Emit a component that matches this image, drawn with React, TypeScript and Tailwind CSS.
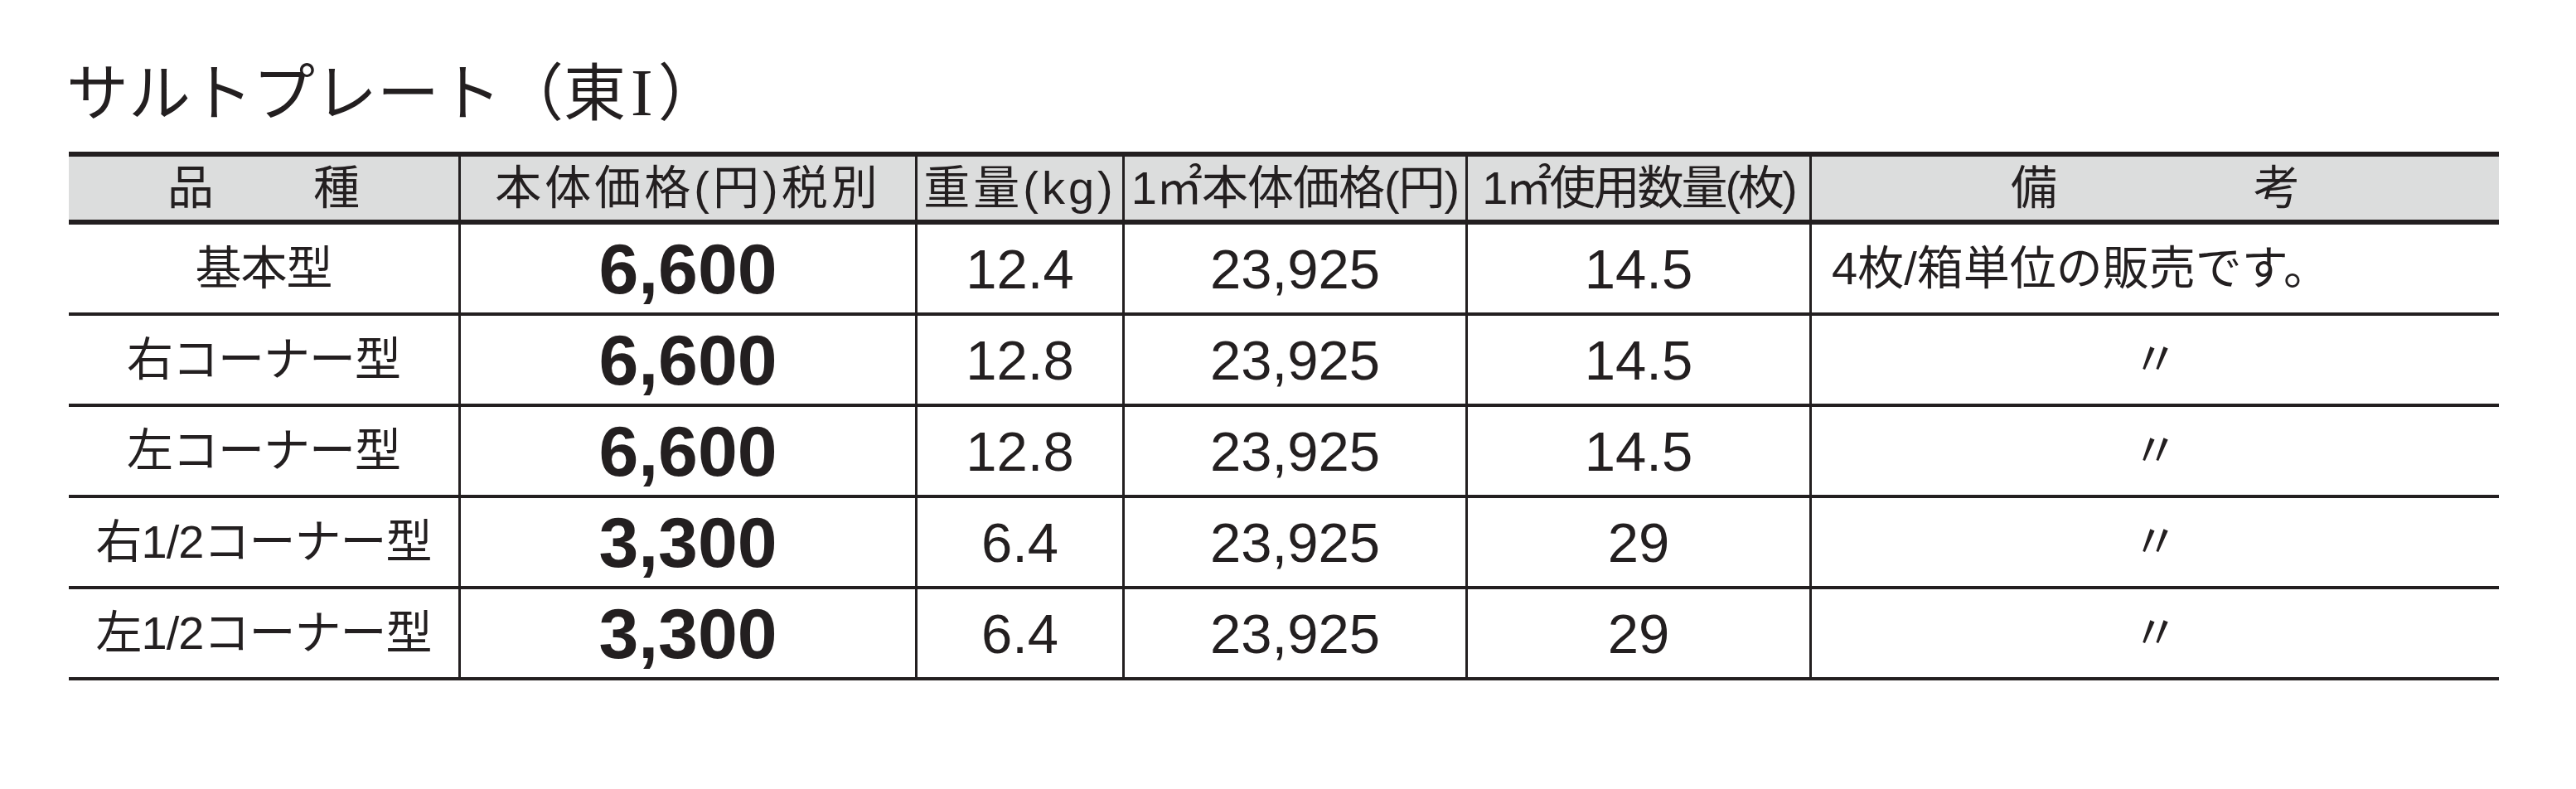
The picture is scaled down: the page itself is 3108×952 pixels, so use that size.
const rows = [
  { name: '基本型', price: '6,600', weight: '12.4', sqm: '23,925', qty: '14.5', note: '4枚/箱単位の販売です。' },
  { name: '右コーナー型', price: '6,600', weight: '12.8', sqm: '23,925', qty: '14.5', note: '〃' },
  { name: '左コーナー型', price: '6,600', weight: '12.8', sqm: '23,925', qty: '14.5', note: '〃' },
  { name: '右1/2コーナー型', price: '3,300', weight: '6.4', sqm: '23,925', qty: '29', note: '〃' },
  { name: '左1/2コーナー型', price: '3,300', weight: '6.4', sqm: '23,925', qty: '29', note: '〃' },
]

const cols = 'grid grid-cols-[470px_551px_250px_414px_415px_832px]'
const cell = 'flex items-center justify-center border-l-[3px] border-[#231f20]'

export default function App() {
  return (
    <div className="w-[3108px] h-[952px] bg-white text-[#231f20] font-['Liberation_Sans','Noto_Sans_CJK_JP',sans-serif]">
      <div className="pl-[80px] pt-[69px]">
        <h1 className="h-[75px] text-[75px] leading-none font-normal font-['Noto_Sans_CJK_JP',sans-serif]">
          サルトプレート（東<span className="font-['Liberation_Serif',serif] text-[80px] leading-none mx-[6px]">I</span>）
        </h1>
      </div>

      <div className="ml-[83px] mt-[39px] w-[2932px]">
        {/* header */}
        <div className={`${cols} h-[88px] border-y-[6px] border-[#231f20] bg-[#dcdddd] text-[56px] leading-none`}>
          <div className="flex items-center justify-center gap-[120px]">
            <span>品</span>
            <span>種</span>
          </div>
          <div className={`${cell} tracking-[4px]`}>本体価格(円)税別</div>
          <div className={`${cell} tracking-[4px]`}>重量(kg)</div>
          <div className={`${cell} tracking-[-1px]`}>1㎡本体価格(円)</div>
          <div className={`${cell} tracking-[-3px]`}>1㎡使用数量(枚)</div>
          <div className={`${cell} gap-[237px]`}>
            <span>備</span>
            <span>考</span>
          </div>
        </div>

        {rows.map((r) => (
          <div key={r.name} className={`${cols} h-[110px] border-b-[4px] border-[#231f20] leading-none`}>
            <div className="flex items-center justify-center text-[56px] tracking-[-1px]">{r.name}</div>
            <div className={`${cell} text-[86px] font-bold`}>{r.price}</div>
            <div className={`${cell} text-[67px]`}>{r.weight}</div>
            <div className={`${cell} text-[67px]`}>{r.sqm}</div>
            <div className={`${cell} text-[67px]`}>{r.qty}</div>
            {r.note === '〃' ? (
              <div className={`${cell} text-[56px]`}>{r.note}</div>
            ) : (
              <div className={`${cell} !justify-start pl-[24px] text-[56px]`}>{r.note}</div>
            )}
          </div>
        ))}
      </div>
    </div>
  )
}
